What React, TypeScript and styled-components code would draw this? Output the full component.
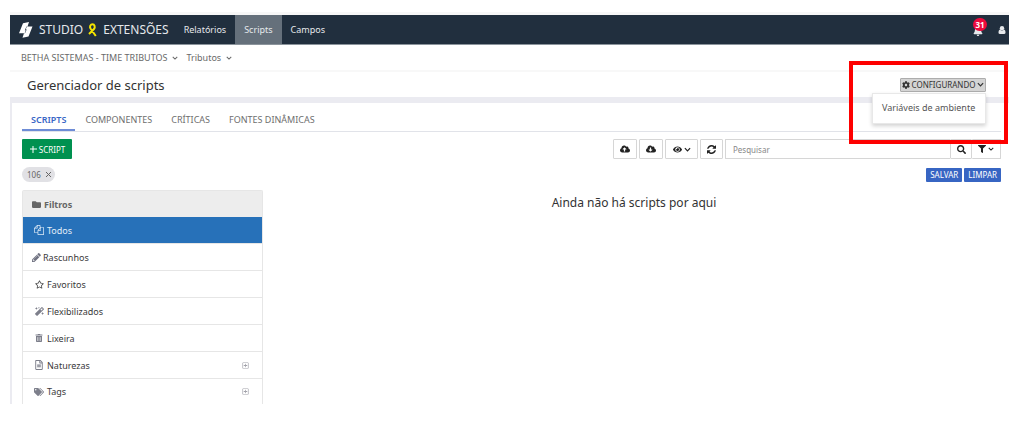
import React from "react";
import styled, { createGlobalStyle, css } from "styled-components";
import {
  FaBell,
  FaCloudDownloadAlt,
  FaCloudUploadAlt,
  FaCog,
  FaEye,
  FaFilter,
  FaFolder,
  FaMagic,
  FaRegFileAlt,
  FaRegPlusSquare,
  FaRegStar,
  FaSearch,
  FaTags,
  FaTrashAlt,
} from "react-icons/fa";

const Global = createGlobalStyle`
  * { box-sizing: border-box; }
  body { margin: 0; background: #fff; }
  body, button, input { font-family: "Noto Sans", "Open Sans", sans-serif; }
  button { margin: 0; cursor: pointer; }
  a { color: inherit; text-decoration: none; }
  svg { display: block; flex: none; }
`;

const Page = styled.div`
  padding: 12px 13px 0 10px;
  color: #333;
  font-size: 9px;
`;

const TopBar = styled.header`
  display: flex;
  align-items: stretch;
  height: 33px;
  border-top: 3px solid #f7f7f7;
  border-bottom: 1px solid #8b949c;
  background: #212f3e;
  color: #e6e9ec;
`;

const Brand = styled.a`
  display: flex;
  align-items: center;
  padding: 0 6px 0 9px;
  font-size: 12px;
  line-height: 20px;
  white-space: nowrap;
`;

const BrandMark = styled.svg`
  margin-right: 6px;
`;

const Ribbon = styled.svg`
  margin: 0 6px 0 5px;
`;

const MainNav = styled.nav`
  display: flex;
`;

const NavLink = styled.a<{ $active?: boolean }>`
  display: flex;
  align-items: center;
  padding: 0 9px;
  font-size: 9px;
  background: ${(p) => (p.$active ? "#65707b" : "transparent")};
`;

const UserTools = styled.div`
  display: flex;
  align-items: center;
  gap: 15px;
  margin-left: auto;
  padding-right: 3px;
`;

const PlainButton = styled.button`
  position: relative;
  display: flex;
  padding: 0;
  border: 0;
  background: none;
  color: inherit;
`;

const BellButton = styled(PlainButton)`
  padding-top: 3px;
`;

const Badge = styled.span`
  position: absolute;
  left: 0;
  top: -5px;
  min-width: 14px;
  height: 13px;
  border-radius: 7px;
  background: #ee0a3c;
  color: #fff;
  font-size: 8px;
  font-weight: 700;
  line-height: 13px;
  text-align: center;
`;

const Context = styled.nav`
  display: flex;
  align-items: center;
  gap: 8px;
  height: 27px;
  padding: 0 11px;
  border-bottom: 2px solid #f8f8f8;
`;

const ContextButton = styled.button`
  display: flex;
  align-items: center;
  gap: 5px;
  padding: 0;
  border: 0;
  background: none;
  color: #6a6a6a;
  font-size: 9px;
`;

const TitleRow = styled.div`
  position: relative;
  display: flex;
  align-items: center;
  justify-content: space-between;
  height: 25px;
  padding: 0 23px 0 17px;
`;

const Title = styled.h1`
  margin: 0;
  font-size: 13px;
  font-weight: 400;
  line-height: 18px;
`;

const ConfigButton = styled.button`
  display: flex;
  align-items: center;
  justify-content: center;
  gap: 1px;
  width: 86px;
  height: 14px;
  padding: 0;
  border: 1px solid #adadad;
  border-radius: 1px;
  background: #d4d4d4;
  color: #333;
  font-size: 8px;
  line-height: 12px;
`;

const Menu = styled.div`
  position: absolute;
  z-index: 2;
  right: 23px;
  top: 21px;
  width: 114px;
  padding: 6px 9px 7px;
  border: 1px solid #e8e8e8;
  background: #fff;
  box-shadow: 0 2px 4px rgba(0, 0, 0, 0.18);
  color: #555;
  font-size: 9px;
  line-height: 16px;
  white-space: nowrap;
`;

const Highlight = styled.div`
  position: absolute;
  z-index: 3;
  right: 1px;
  top: -11px;
  width: 159px;
  height: 83px;
  border: 4px solid #fe0000;
  pointer-events: none;
`;

const Content = styled.main`
  padding: 5px 8px 0 10px;
  border-top: 6px solid #ebebf1;
  border-left: 2px solid #ebebf1;
`;

const Tabs = styled.nav`
  display: flex;
  gap: 1px;
  height: 24px;
  border-bottom: 1px solid #e1e3e9;
`;

const Tab = styled.a<{ $active?: boolean }>`
  padding: 4px 9px 0;
  color: #6e6e6e;
  font-size: 9px;
  line-height: 16px;
  ${(p) =>
    p.$active &&
    css`
      border-bottom: 2px solid #6e8cd6;
      color: #3a67c6;
      font-weight: 600;
    `}
`;

const Toolbar = styled.div`
  display: flex;
  justify-content: space-between;
  margin-top: 7px;
`;

const AddButton = styled.button`
  display: flex;
  align-items: center;
  justify-content: center;
  gap: 2px;
  width: 50px;
  height: 20px;
  padding: 0;
  border: 0;
  border-radius: 1px;
  background: #009150;
  color: #fff;
  font-size: 8px;
`;

const Tools = styled.div`
  display: flex;
  gap: 2px;
`;

const ToolButton = styled.button<{ $w: number }>`
  display: flex;
  align-items: center;
  justify-content: center;
  gap: 2px;
  width: ${(p) => p.$w}px;
  height: 20px;
  padding: 0;
  border: 1px solid #d6d6d6;
  border-radius: 1px;
  background: #fff;
  color: #222;
`;

const Search = styled.form`
  display: flex;
`;

const SearchInput = styled.input`
  width: 225px;
  height: 20px;
  padding: 0 7px;
  border: 1px solid #d6d6d6;
  border-right: 0;
  border-radius: 1px 0 0 1px;
  font-size: 8px;
  &::placeholder { color: #888; opacity: 1; }
`;

const JoinedButton = styled(ToolButton)`
  & + & { border-left: 0; }
`;

const FilterRow = styled.div`
  display: flex;
  align-items: center;
  justify-content: space-between;
  height: 15px;
  margin-top: 8px;
`;

const Chip = styled.span`
  display: flex;
  align-items: center;
  gap: 4px;
  height: 15px;
  padding: 0 3px 0 5px;
  border-radius: 8px;
  background: #e1e1e5;
  color: #666;
  font-size: 8px;
`;

const Actions = styled.div`
  display: flex;
  gap: 2px;
`;

const BlueButton = styled.button`
  height: 14px;
  padding: 0 4px;
  border: 0;
  border-radius: 1px;
  background: #3765c3;
  color: #fff;
  font-size: 8px;
  line-height: 14px;
`;

const Columns = styled.div`
  display: grid;
  grid-template-columns: 241px 1fr;
  margin-top: 8px;
`;

const Panel = styled.aside`
  border: 1px solid #e6e6e6;
  border-bottom: 0;
  border-radius: 2px 2px 0 0;
`;

const PanelTitle = styled.h2`
  display: flex;
  align-items: center;
  gap: 3px;
  height: 26px;
  margin: 0;
  padding: 0 9px;
  background: #ededed;
  color: #666;
  font-size: 9px;
  font-weight: 700;
`;

const FilterList = styled.ul`
  margin: 0;
  padding: 0;
  list-style: none;
`;

const FilterLink = styled.a<{ $active?: boolean; $tight?: boolean }>`
  display: flex;
  align-items: center;
  gap: 3px;
  height: 27px;
  padding: 0 13px 0 ${(p) => (p.$tight ? 9 : 11)}px;
  border-bottom: 1px solid #e6e6e6;
  background: ${(p) => (p.$active ? "#2771b9" : "#fff")};
  color: ${(p) => (p.$active ? "#e4eef8" : "#3a3a3a")};
  font-size: 9px;
  li:last-child > & { height: 25px; border-bottom: 0; }
`;

const IconSlot = styled.span<{ $w: number; $color: string }>`
  display: flex;
  justify-content: center;
  width: ${(p) => p.$w}px;
  color: ${(p) => p.$color};
`;

const Expand = styled(FaRegPlusSquare)`
  margin-left: auto;
  color: #a2a2aa;
`;

const Empty = styled.p`
  margin: 4px 0 0;
  padding-left: 4px;
  font-size: 12px;
  line-height: 17px;
  text-align: center;
`;

const Chevron = ({ size = 7 }: { size?: number }) => (
  <svg width={size} height={size} viewBox="0 0 8 8" fill="none" stroke="currentColor" strokeWidth="1.4">
    <path d="M1 2.5 4 5.5 7 2.5" />
  </svg>
);

const Cross = () => (
  <svg width="7" height="7" viewBox="0 0 7 7" stroke="currentColor" strokeWidth="1">
    <path d="M1 1 6 6M6 1 1 6" />
  </svg>
);

const Person = () => (
  <svg width="8" height="8" viewBox="0 0 8 8" fill="currentColor">
    <circle cx="4" cy="2.2" r="2.2" />
    <path d="M2 3.600C1 4 .5 5 .5 6.800 .5 7.500 1 8 1.700 8H6.300C7 8 7.500 7.500 7.500 6.800 7.500 5 7 4 6 3.600 5 5 3 5 2 3.600Z" />
  </svg>
);

const Pencil = () => (
  <svg width="9" height="9" viewBox="0 128 1536 1536" fill="currentColor">
    <path d="M363 1536l91-91-235-235-91 91v107h128v128h107zm523-928q0-22-22-22-10 0-17 7l-542 542q-7 7-7 17 0 22 22 22 10 0 17-7l542-542q7-7 7-17zm-54-192l416 416-832 832H0v-416zm683 96q0 53-37 90l-166 166-416-416 166-165q36-38 90-38 53 0 91 38l235 234q37 39 37 91z" />
  </svg>
);

const Refresh = () => (
  <svg width="9" height="9" viewBox="0 0 1536 1536" fill="currentColor">
    <path d="M1511 928q0 5-1 7-64 268-268 434.500T764 1536q-146 0-282.500-55T238 1324l-129 129q-19 19-45 19t-45-19-19-45V960q0-26 19-45t45-19h448q26 0 45 19t19 45-19 45l-137 137q71 66 161 102t187 36q134 0 250-65t186-179q11-17 53-117 8-23 30-23h192q13 0 22.500 9.500t9.500 22.500zm25-800v448q0 26-19 45t-45 19h-448q-26 0-45-19t-19-45 19-45l138-138Q969 256 768 256q-134 0-250 65T332 500q-11 17-53 117-8 23-30 23H50q-13 0-22.500-9.500T18 608v-7q65-268 270-434.500T768 0q146 0 284 55.500T1297 212l130-129q19-19 45-19t45 19 19 45z" />
  </svg>
);

const Files = () => (
  <svg width="10" height="10" viewBox="0 0 1792 1792" fill="currentColor">
    <path d="M1696 384q40 0 68 28t28 68v1216q0 40-28 68t-68 28H736q-40 0-68-28t-28-68v-288H96q-40 0-68-28T0 1312V640q0-40 20-88t48-76L476 68q28-28 76-48t88-20h416q40 0 68 28t28 68v328q68-40 128-40h416zm-544 213L853 896h299V597zM512 213L213 512h299V213zm196 647l316-316V128H640v416q0 40-28 68t-68 28H128v640h512v-256q0-40 20-88t48-76zm956 804V512h-416v416q0 40-28 68t-68 28H768v640h896z" />
  </svg>
);

const filters = [
  { label: "Todos", icon: <Files />, active: true, color: "#e4eef8" },
  { label: "Rascunhos", icon: <Pencil />, tight: true, color: "#6f7180" },
  { label: "Favoritos", icon: <FaRegStar size={9} />, color: "#444" },
  { label: "Flexibilizados", icon: <FaMagic size={9} />, color: "#7d7f8b" },
  { label: "Lixeira", icon: <FaTrashAlt size={8} />, color: "#7d7f8b" },
  { label: "Naturezas", icon: <FaRegFileAlt size={10} />, expandable: true, color: "#7d7f8b" },
  { label: "Tags", icon: <FaTags size={10} />, expandable: true, color: "#7d7f8b" },
];

export default function App() {
  return (
    <>
      <Global />
      <Page>
        <TopBar>
          <Brand href="#">
            <BrandMark width="14" height="16" viewBox="0 0 14 16" fill="#fff">
              <path d="M4 1.200 10 0 8.600 4.200 7.500 4.400 5.800 8.200H6.800L5.600 11.300H0ZM9.500 14.500 3.500 15.700 4.900 11.500 6 11.300 7.700 7.500H6.700L7.900 4.600H13.500Z" />
            </BrandMark>
            STUDIO
            <Ribbon width="9" height="14" viewBox="0 0 9 14" fill="none" stroke="#f4e400" strokeWidth="2">
              <path d="M1 11 6 6C7.500 4 6.500 1.200 4.500 1.200S1.300 3.500 2.500 5.500L7.800 13" />
            </Ribbon>
            EXTENSÕES
          </Brand>
          <MainNav>
            <NavLink href="#">Relatórios</NavLink>
            <NavLink href="#" $active>Scripts</NavLink>
            <NavLink href="#">Campos</NavLink>
          </MainNav>
          <UserTools>
            <BellButton aria-label="Notificações">
              <FaBell size={10} />
              <Badge>31</Badge>
            </BellButton>
            <PlainButton aria-label="Usuário">
              <Person />
            </PlainButton>
          </UserTools>
        </TopBar>
        <Context>
          <ContextButton>BETHA SISTEMAS - TIME TRIBUTOS <Chevron size={6} /></ContextButton>
          <ContextButton>Tributos <Chevron size={6} /></ContextButton>
        </Context>
        <TitleRow>
          <Title>Gerenciador de scripts</Title>
          <ConfigButton><FaCog size={8} />CONFIGURANDO<Chevron size={7} /></ConfigButton>
          <Menu><a href="#">Variáveis de ambiente</a></Menu>
          <Highlight />
        </TitleRow>
        <Content>
          <Tabs>
            <Tab href="#" $active>SCRIPTS</Tab>
            <Tab href="#">COMPONENTES</Tab>
            <Tab href="#">CRÍTICAS</Tab>
            <Tab href="#">FONTES DINÂMICAS</Tab>
          </Tabs>
          <Toolbar>
            <AddButton>
              <svg width="8" height="8" viewBox="0 0 8 8" stroke="currentColor" strokeWidth="1"><path d="M4 1V8M1 4H8" /></svg>
              SCRIPT
            </AddButton>
            <Tools>
              <ToolButton $w={24} aria-label="Enviar"><FaCloudUploadAlt size={10} /></ToolButton>
              <ToolButton $w={24} aria-label="Baixar"><FaCloudDownloadAlt size={10} /></ToolButton>
              <ToolButton $w={33} aria-label="Exibir"><FaEye size={9} /><Chevron /></ToolButton>
              <ToolButton $w={23} aria-label="Atualizar"><Refresh /></ToolButton>
              <Search>
                <SearchInput placeholder="Pesquisar" aria-label="Pesquisar" />
                <JoinedButton $w={22} type="button" aria-label="Buscar"><FaSearch size={9} /></JoinedButton>
                <JoinedButton $w={29} type="button" aria-label="Filtrar"><FaFilter size={8} /><Chevron size={6} /></JoinedButton>
              </Search>
            </Tools>
          </Toolbar>
          <FilterRow>
            <Chip>106 <PlainButton aria-label="Remover filtro"><Cross /></PlainButton></Chip>
            <Actions>
              <BlueButton>SALVAR</BlueButton>
              <BlueButton>LIMPAR</BlueButton>
            </Actions>
          </FilterRow>
          <Columns>
            <Panel>
              <PanelTitle><FaFolder size={9} />Filtros</PanelTitle>
              <FilterList>
                {filters.map((f) => (
                  <li key={f.label}>
                    <FilterLink href="#" $active={f.active} $tight={f.tight}>
                      <IconSlot $w={f.tight ? 8 : 10} $color={f.color}>{f.icon}</IconSlot>
                      {f.label}
                      {f.expandable && <Expand size={7} />}
                    </FilterLink>
                  </li>
                ))}
              </FilterList>
            </Panel>
            <Empty>Ainda não há scripts por aqui</Empty>
          </Columns>
        </Content>
      </Page>
    </>
  );
}
